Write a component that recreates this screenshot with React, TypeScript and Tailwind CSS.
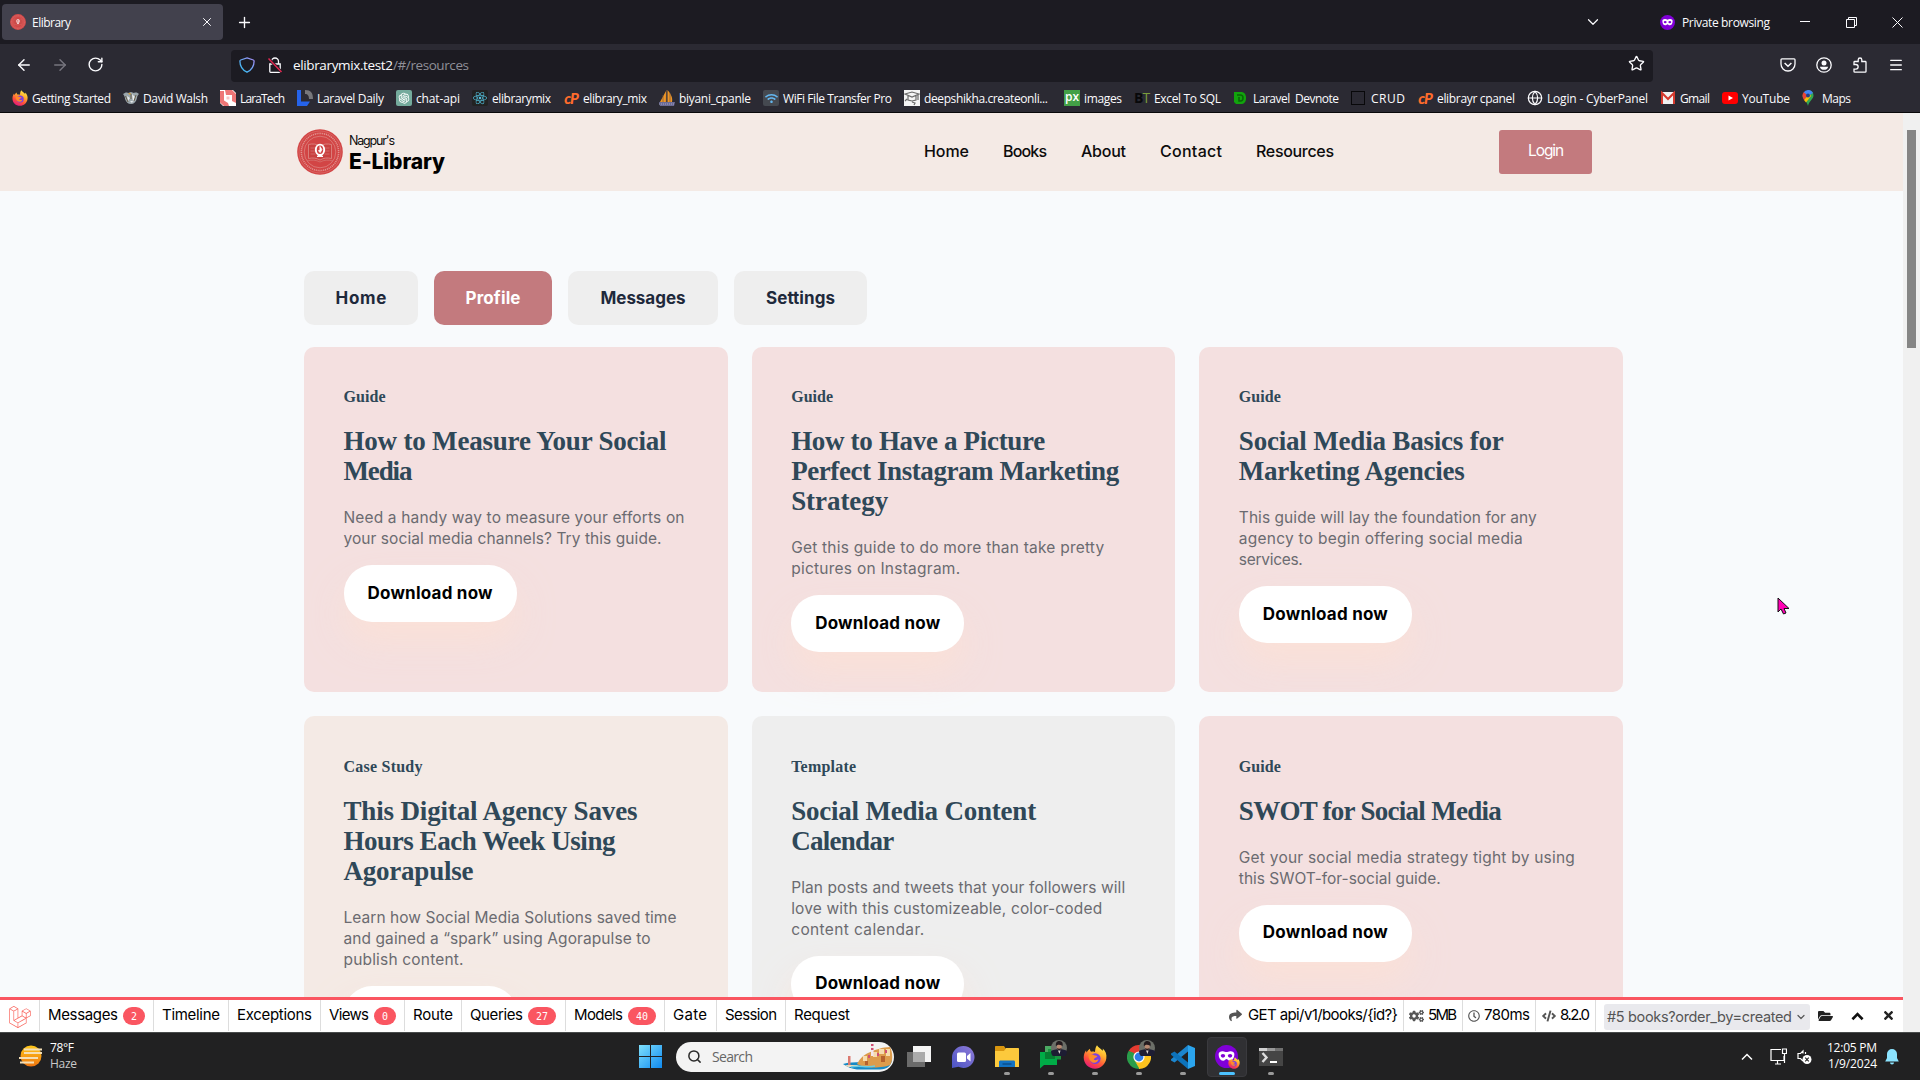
import React, { useLayoutEffect, useRef } from "react";
import {
  ArrowLeft,
  ArrowRight,
  ChevronDown,
  Globe,
  Menu,
  Plus,
  RotateCw,
  Search,
  Star,
  X,
} from "lucide-react";
import { FaLaravel, FaReact, FaShare, FaCogs, FaRegClock, FaCode, FaFolderOpen, FaTimes, FaWifi } from "react-icons/fa";
import { AiOutlineOpenAI } from "react-icons/ai";

/** One line of text tracked so that it fills the given width. */
function Line({ w, className = "", children }: { w: number; className?: string; children: string }) {
  const ref = useRef<HTMLSpanElement>(null);
  useLayoutEffect(() => {
    const el = ref.current;
    if (!el) return;
    el.style.letterSpacing = "0px";
    const natural = el.getBoundingClientRect().width;
    el.style.letterSpacing = `${(w - natural) / Math.max(1, children.length - 1)}px`;
  }, [w, children]);
  return (
    <span className="block shrink-0 whitespace-pre" style={{ width: w }}>
      <span ref={ref} className={"inline-block whitespace-pre " + className}>
        {children}
      </span>
    </span>
  );
}

/* ---------- icons ---------- */

function Emblem({ className = "" }: { className?: string }) {
  return (
    <svg viewBox="0 0 46 46" className={className}>
      <circle cx="23" cy="23" r="22.8" fill="#d24545" />
      <circle cx="23" cy="23" r="21" fill="none" stroke="#de7f7c" strokeWidth=".5" />
      <circle cx="23" cy="23" r="18.6" fill="none" stroke="#e29390" strokeWidth="1.600" strokeDasharray="1.1 .8" />
      <circle cx="23" cy="23" r="15.8" fill="none" stroke="#e08a87" strokeWidth=".7" />
      <path d="M11.5 15.5c4-1 8-.6 11.5 1.5 3.500-2.100 7.500-2.500 11.500-1.500v14c-4-1-8-.6-11.500 1.500-3.500-2.100-7.500-2.500-11.500-1.500z" fill="#c9403f" stroke="#dd8b88" strokeWidth=".8" />
      <path d="M13.500 19h5M13.500 22h5M13.500 25h5M27.500 19h5M27.500 22h5M27.500 25h5M10 32c5-1.500 9-1 13 1 4-2 8-2.500 13-1" stroke="#d67875" strokeWidth=".7" fill="none" />
      <ellipse cx="23" cy="20.800" rx="4.200" ry="5.200" fill="#cf4242" stroke="#fff" strokeWidth="1.900" />
      <path d="M23 17.500v3l-1.500 1.500 1.800 1.500 1.500-3zM20 27.500l3-2 3 2z" fill="#fff" stroke="#fff" strokeWidth=".9" />
    </svg>
  );
}

function Firefox({ className = "" }: { className?: string }) {
  return (
    <svg viewBox="0 0 24 24" className={className}>
      <defs>
        <linearGradient id="ffBody" x1=".8" y1="0" x2=".3" y2="1">
          <stop offset="0" stopColor="#fff04d" />
          <stop offset=".35" stopColor="#ffb22e" />
          <stop offset=".7" stopColor="#ff4f3c" />
          <stop offset="1" stopColor="#e3187e" />
        </linearGradient>
      </defs>
      <path d="M14 .3c1 2 4 3.500 5.500 5.500.6-.5.400-1.500.200-2.200C22.500 6 24 9.500 23.300 13.500 22.400 19.500 17.600 23.700 12 23.700 5.600 23.700.7 18.800.7 12.600c0-3 1-5.500 2.400-7.400 0 1 .2 1.700.6 2.200.9-1.800 2-2.900 3.300-3.700 0 1.200.3 2.300 1.200 3C9.400 6.500 11 6.700 12 7 12.200 4.500 12.500 2 14 .3z" fill="url(#ffBody)" />
      <circle cx="12.200" cy="13.600" r="5.400" fill="#7a3fe0" />
      <path d="M5.500 9.500c2-.6 4.500-.3 6.500 1 1.300.1 2 .4 2.400.8-1 1.700-3 1.500-3.700 3.200 1.500 1.200 3.800.6 4.800-.7-.3 3-2.800 4.300-5 3.900-3-.5-5.200-3.500-5-8.200z" fill="#ff8a2a" />
    </svg>
  );
}

function Mask({ className = "" }: { className?: string }) {
  return (
    <svg viewBox="0 0 24 24" className={className}>
      <circle cx="12" cy="12" r="12" fill="#8000d7" />
      <path d="M3.800 9.500C3.800 7.500 6 6.300 8.200 6.500c1.500.1 2.600.9 3.800.9s2.300-.8 3.800-.9c2.200-.2 4.400 1 4.400 3 0 4-1.800 7-4.600 7-2 0-2.700-1.800-3.600-1.800s-1.600 1.800-3.600 1.800c-2.800 0-4.600-3-4.600-7z" fill="#fff" />
      <ellipse cx="8.300" cy="11.300" rx="2.300" ry="1.900" fill="#8000d7" />
      <ellipse cx="15.700" cy="11.300" rx="2.300" ry="1.900" fill="#8000d7" />
    </svg>
  );
}

function Chrome({ className = "" }: { className?: string }) {
  return (
    <svg viewBox="0 0 24 24" className={className}>
      <path d="M12 12 1.600 6A12 12 0 0 1 22.400 6z" fill="#e53b30" />
      <path d="M12 12 22.400 6A12 12 0 0 1 12 24z" fill="#fcc31e" />
      <path d="M12 12v12A12 12 0 0 1 1.600 6z" fill="#2a9d4a" />
      <path d="M12 6.500h10.600a12 12 0 0 0-.2-.5H11z" fill="#e53b30" />
      <path d="M7.200 14.800 12.500 24 17 14.500z" fill="#fcc31e" />
      <path d="M1.600 6l5.400 9 3 2.500L7 8z" fill="#2a9d4a" />
      <circle cx="12" cy="12" r="5.600" fill="#fff" />
      <circle cx="12" cy="12" r="4.400" fill="#2f7de9" />
    </svg>
  );
}

function Avatar() {
  return (
    <svg viewBox="0 0 16 16" className="absolute -top-[5px] left-[12px] size-4">
      <circle cx="8" cy="8" r="8" fill="#6c6f68" />
      <path d="M0 11c3-2 13-2.500 16 0a8 8 0 0 1-16 0z" fill="#1d1d33" />
      <path d="M7 10.500h2.500l-1 3.500z" fill="#d9d2cc" />
      <ellipse cx="8.200" cy="6.500" rx="2.500" ry="3.600" fill="#b98a72" />
      <path d="M5 6.500c-.8-4 1.300-5.500 3.500-5.400C11.300 1.200 12.300 3 11.500 6.500 11 4.700 6 3.700 5 6.500zM6 8c1 1 3.500 1 4.500 0-.3 2.800-4 2.800-4.500 0z" fill="#231a1e" />
    </svg>
  );
}

function Shield() {
  return (
    <svg viewBox="0 0 16 16" className="h-4 w-4" fill="none">
      <defs>
        <linearGradient id="sh" x1="1" y1="0" x2="0" y2="1">
          <stop offset="0" stopColor="#a98bf5" />
          <stop offset="1" stopColor="#2bc3f2" />
        </linearGradient>
      </defs>
      <path d="M8 .9 14.300 3c.5.200.8.500.8 1 0 5-2 8.800-7.100 11.200C2.900 12.800.9 9 .9 4c0-.5.300-.8.800-1z" stroke="url(#sh)" strokeWidth="1.300" />
    </svg>
  );
}

function BrokenLock() {
  return (
    <svg viewBox="0 0 16 16" className="h-4 w-4" fill="none">
      <path d="M4.500 7V4.500a3.500 3.500 0 0 1 7 0V7M2.800 7h10.400v7.500a.8.800 0 0 1-.8.800H3.600a.8.800 0 0 1-.8-.8z" stroke="#fbfbfe" strokeWidth="1.300" />
      <path d="m1.500 1.500 13 13.500" stroke="#1c1b22" strokeWidth="3" />
      <path d="m1.500 1.500 13 13.500" stroke="#e22850" strokeWidth="1.500" />
    </svg>
  );
}

function CPanel() {
  return (
    <span className="flex h-4 w-4 shrink-0 items-center justify-center font-['Lato'] text-[15px] leading-none font-black tracking-[-1px] text-[#ff6c2c] italic">
      cP
    </span>
  );
}

const ico = "h-4 w-4 shrink-0";

const bookmarks: { label: string; w: number; icon: React.ReactNode; text?: number }[] = [
  { label: "Getting Started", w: 79, icon: <Firefox className={ico} /> },
  {
    label: "David Walsh",
    w: 65,
    icon: (
      <svg viewBox="0 0 16 16" className={ico}>
        <path d="M0 4c2-1 3-2 5-1l3-1 3 1c2-1 4 0 5 1-1 1-2 2-2 4-1 4-3 6-6 6S3 12 2 9C2 7 1 5 0 4z" fill="#9aa5ab" />
        <path d="m4 6 3 2-2 3zM9 4l3 3-2 5zM7 11l2 2 1-2z" fill="#e8ebec" />
        <path d="M2.500 6l2.500 6M8 4v5M13 5l-2 6" stroke="#5a4a30" strokeWidth=".8" />
        <path d="M5 3l2 2 1-2z" fill="#d09a32" />
      </svg>
    ),
  },
  {
    label: "LaraTech",
    w: 45,
    icon: (
      <svg viewBox="0 0 16 16" className={ico}>
        <path d="M0 0h13l3 3v13H3l-3-3z" fill="#fff" />
        <path d="M0 1h4v9.500L8 13l1 3H4L0 12.500zM5 0h7l4 4v9l-4-2V5H6z" fill="#ee7676" />
        <path d="M6.500 6.500h3v3h-3z" fill="#f8c4c4" />
      </svg>
    ),
  },
  {
    label: "Laravel Daily",
    w: 67,
    icon: (
      <svg viewBox="0 0 16 16" className={ico}>
        <path d="M0 0h4v11.500h9L10 16H0z" fill="#2563eb" />
        <path d="M8 0c6 0 8 3 8 9h-4c0-3-1-5-4-5z" fill="#77777b" />
      </svg>
    ),
  },
  {
    label: "chat-api",
    w: 44,
    icon: (
      <span className="flex h-4 w-4 shrink-0 items-center justify-center rounded-[2px] bg-[#74aa9c]">
        <AiOutlineOpenAI className="h-3.5 w-3.5 text-white" />
      </span>
    ),
  },
  {
    label: "elibrarymix",
    w: 59,
    icon: (
      <span className="flex h-4 w-4 shrink-0 items-center justify-center rounded-[2px] bg-[#222]">
        <FaReact className="h-3.5 w-3.5 text-[#53c1de]" />
      </span>
    ),
  },
  { label: "elibrary_mix", w: 64, icon: <CPanel /> },
  {
    label: "biyani_cpanle",
    w: 72,
    icon: (
      <svg viewBox="0 0 16 16" className={ico}>
        <path d="M7 1v11H1zM8.500 0C12 4 14 8 13 12H8.500z" fill="#ee9526" />
        <path d="m7.500 0-.2 12M4 5v7M11 3v9" stroke="#735641" strokeWidth=".7" />
        <path d="M0 12h16l-1 4H1z" fill="#6b6b96" />
        <path d="M0 14h16" stroke="#a3a3c4" strokeDasharray="1 1" />
      </svg>
    ),
  },
  {
    label: "WiFi File Transfer Pro",
    w: 109,
    icon: (
      <span className="flex h-4 w-4 shrink-0 items-center justify-center rounded-[2px] bg-[#454950]">
        <FaWifi className="h-[13px] w-[13px] text-[#63b6ee]" />
      </span>
    ),
  },
  {
    label: "deepshikha.createonli...",
    w: 128,
    text: 124,
    icon: (
      <svg viewBox="0 0 16 16" className={ico}>
        <path d="M0 0h16v16H0z" fill="#f4f4f4" />
        <path d="m1 4 7-2 7 2-7 3zM4 6v4l4 1 4-1V6M14 5v5M3 9l-2 2M8 12l3 1-1 2" fill="none" stroke="#6a6a6a" strokeWidth="1.200" />
      </svg>
    ),
  },
  {
    label: "images",
    w: 38,
    icon: (
      <span className="flex h-4 w-4 shrink-0 items-center justify-center bg-[#43a047] pb-0.5 font-['Open_Sans'] text-[12px] leading-none font-semibold text-white">
        px
      </span>
    ),
  },
  {
    label: "Excel To SQL",
    w: 67,
    icon: (
      <span className="flex h-4 w-4 shrink-0 items-center text-[14px] leading-none font-bold">
        <span className="text-[#08080a]">B</span>
        <span className="-ml-px font-normal text-[#7a9c3c]">T</span>
      </span>
    ),
  },
  {
    label: "Laravel  Devnote",
    w: 86,
    icon: (
      <svg viewBox="0 0 16 16" className={ico}>
        <path d="M1 2h7c3 0 5 2 5 6s-2 6-5 6H3l-2-2z" fill="#12a30d" />
        <path d="M4 5h3.500C9.500 5 10 6.200 10 8s-.6 3-2.500 3H6V7" fill="none" stroke="#086606" strokeWidth="1.500" />
      </svg>
    ),
  },
  { label: "CRUD", w: 34, icon: <span className="mr-0.5 h-[14px] w-[14px] shrink-0 border border-[#08080a]" /> },
  { label: "elibrayr cpanel", w: 78, icon: <CPanel /> },
  { label: "Login - CyberPanel", w: 101, icon: <Globe className="h-4 w-4 shrink-0 text-[#fbfbfe]" strokeWidth={1.8} /> },
  {
    label: "Gmail",
    w: 30,
    icon: (
      <svg viewBox="0 0 16 16" className={ico}>
        <path d="M1 2h14v12H1z" fill="#f1f1f1" />
        <path d="M2 14V3l6 6 6-6v11" fill="none" stroke="#d5392d" strokeWidth="2" />
      </svg>
    ),
  },
  {
    label: "YouTube",
    w: 48,
    icon: (
      <svg viewBox="0 0 16 16" className={ico}>
        <rect x="0" y="2" width="16" height="12" rx="3" fill="#f00" />
        <path d="m6.500 5.500 4.500 2.500-4.500 2.500z" fill="#fff" />
      </svg>
    ),
  },
  {
    label: "Maps",
    w: 29,
    icon: (
      <svg viewBox="0 0 16 16" className="-ml-px mr-px h-4 w-4 shrink-0">
        <path d="M7 0a5.500 5.500 0 0 1 5.500 5.500C12.500 9 8 11 7 16 6 11 1.500 9 1.500 5.500z" fill="#34a853" />
        <path d="M7 0a5.500 5.500 0 0 1 5 3L7 6 2.500 2.500A5.500 5.500 0 0 1 7 0z" fill="#4285f4" />
        <path d="M2.700 2.200 7 5.500 3 10C2 8.500 1.500 7 1.500 5.500c0-1.500.5-2.500 1.200-3.300z" fill="#ea4335" />
        <path d="M3 10 8.500 4 10 6 5 12.500z" fill="#fbbc04" />
        <circle cx="7" cy="5.500" r="2" fill="#20408c" />
      </svg>
    ),
  },
];

function Browser() {
  return (
    <div className="h-[113px] shrink-0 border-b border-[#08080a] bg-[#2b2a33] font-['Open_Sans',sans-serif] text-[12px] text-[#fbfbfe]">
      <div className="flex h-11 items-center bg-[#1c1b22] pl-0.5">
        <div className="flex h-9 w-[221px] items-center rounded-[4px] bg-[#42414d] pl-2">
          <Emblem className="h-4 w-4" />
          <div className="ml-1.5 pt-px">
            <Line w={39}>Elibrary</Line>
          </div>
          <X className="mr-[9px] ml-auto h-3.5 w-3.5" strokeWidth={1.7} />
        </div>
        <Plus className="ml-[13px] h-[17px] w-[17px]" strokeWidth={1.9} />
        <ChevronDown className="ml-auto h-[18px] w-[18px]" strokeWidth={1.6} />
        <Mask className="ml-[58px] h-[15px] w-[15px]" />
        <div className="ml-[7px] pt-0.5">
          <Line w={88}>Private browsing</Line>
        </div>
        <div className="mt-[-1px] ml-[30px] h-px w-[10px] bg-[#fbfbfe]" />
        <svg viewBox="0 0 11 11" className="ml-9 h-[11px] w-[11px]" fill="none" stroke="#fbfbfe">
          <path d="M.5 2.500h8v8h-8zM2.500 2V.5h8v8H9" />
        </svg>
        <svg viewBox="0 0 11 11" className="mr-[17px] ml-[35px] h-[11px] w-[11px]" fill="none" stroke="#fbfbfe">
          <path d="m.5.5 10 10m0-10-10 10" />
        </svg>
      </div>
      <div className="flex h-10 items-center pt-1">
        <ArrowLeft className="-mt-[3px] ml-[15px] h-[18px] w-[18px]" strokeWidth={1.9} />
        <ArrowRight className="-mt-[3px] ml-[18px] h-[18px] w-[18px] text-[#77767f]" strokeWidth={1.9} />
        <RotateCw className="-mt-[3px] ml-[18px] h-[17px] w-[17px]" strokeWidth={2} />
        <div className="ml-[127px] flex h-8 w-[1422px] items-center rounded-[4px] bg-[#1c1b22] pb-0.5 pl-2">
          <Shield />
          <div className="ml-3">
            <BrokenLock />
          </div>
          <div className="ml-2.5 flex text-[13.500px]">
            <Line w={100}>elibrarymix.test2</Line>
            <Line w={76} className="text-[#8f8f98]">
              /#/resources
            </Line>
          </div>
          <Star className="mr-2 ml-auto -mt-1 h-[17px] w-[17px]" strokeWidth={1.9} />
        </div>
        <svg viewBox="0 0 16 16" className="-mt-[3px] ml-[127px] h-4 w-4" fill="none" stroke="#fbfbfe" strokeWidth="1.300">
          <path d="M1 2.700c0-.5.300-.9.900-.9h12.200c.6 0 .9.400.9.900V7a7 7 0 0 1-14 0z" />
          <path d="m4.600 6 3.400 3.200L11.400 6" strokeWidth="1.500" />
        </svg>
        <svg viewBox="0 0 16 16" className="-mt-[3px] ml-5 h-4 w-4">
          <circle cx="8" cy="8" r="7.200" fill="none" stroke="#fbfbfe" strokeWidth="1.300" />
          <circle cx="8" cy="6" r="2.500" fill="#fbfbfe" />
          <path d="M3.800 9.700h8.400C11.500 12 10 12.800 8 12.800s-3.500-.8-4.200-3.100z" fill="#fbfbfe" />
        </svg>
        <svg viewBox="0 0 16 16" className="-mt-[3px] ml-5 h-4 w-4" fill="none" stroke="#fbfbfe" strokeWidth="1.300">
          <path d="M2 7.500V5.300c0-.5.300-.8.800-.8h3.400V2.800a1.800 1.800 0 0 1 3.600 0v1.700h3.400c.5 0 .8.300.8.800v9.100c0 .5-.3.800-.8.800H2.800a.8.800 0 0 1-.8-.8v-2.200h1.800a2.300 2.300 0 0 0 0-4.700z" />
        </svg>
        <Menu className="-mt-[3px] ml-5 h-4 w-4" strokeWidth={1.9} />
      </div>
      <div className="flex h-[28px] items-center pl-3">
        {bookmarks.map((b) => (
          <div key={b.label} className="mr-3 flex shrink-0 items-center gap-1">
            {b.icon}
            <div className="shrink-0 pt-0.5" style={{ width: b.w }}>
              <Line w={b.text ?? b.w}>{b.label}</Line>
            </div>
          </div>
        ))}
      </div>
    </div>
  );
}

function Header() {
  return (
    <header className="flex h-[78px] shrink-0 items-center bg-[#f4eae5] pl-[297px] text-[16px] font-medium text-[#0c0c0c]">
      <Emblem className="h-[46px] w-[46px]" />
      <div className="ml-1.5 flex w-[575px] flex-col pb-0.5">
        <Line w={46} className="text-[12.500px] leading-[14px] font-normal">
          Nagpur's
        </Line>
        <Line w={96} className="text-[21px] leading-[20px] font-extrabold text-black">
          E-Library
        </Line>
      </div>
      <nav className="-mt-0.5 flex gap-[34px]">
        <Line w={45}>Home</Line>
        <Line w={44}>Books</Line>
        <Line w={45}>About</Line>
        <Line w={62}>Contact</Line>
        <Line w={78}>Resources</Line>
      </nav>
      <button className="ml-[165px] flex h-11 w-[93px] items-center justify-center rounded-[3px] bg-[#c37a7e] pb-0.5 text-[15.500px] font-normal text-white">
        <Line w={36}>Login</Line>
      </button>
    </header>
  );
}

type CardData = { kind: [string, number]; title: [string, number][]; body: [string, number][]; bg: string; action: string };

const cards: CardData[] = [
  {
    kind: ["Guide", 42],
    title: [["How to Measure Your Social", 323], ["Media", 69]],
    body: [["Need a handy way to measure your efforts on", 341], ["your social media channels? Try this guide.", 318]],
    bg: "bg-[#f4e0e0] pt-10",
    action: "Download now",
  },
  {
    kind: ["Guide", 42],
    title: [["How to Have a Picture", 254], ["Perfect Instagram Marketing", 328], ["Strategy", 97]],
    body: [["Get this guide to do more than take pretty", 313], ["pictures on Instagram.", 169]],
    bg: "bg-[#f4e0e0] pt-10",
    action: "Download now",
  },
  {
    kind: ["Guide", 42],
    title: [["Social Media Basics for", 265], ["Marketing Agencies", 226]],
    body: [["This guide will lay the foundation for any", 298], ["agency to begin offering social media", 284], ["services.", 64]],
    bg: "bg-[#f4e0e0] pt-10",
    action: "Download now",
  },
  {
    kind: ["Case Study", 79],
    title: [["This Digital Agency Saves", 294], ["Hours Each Week Using", 272], ["Agorapulse", 130]],
    body: [["Learn how Social Media Solutions saved time", 333], ["and gained a “spark” using Agorapulse to", 307], ["publish content.", 120]],
    bg: "bg-[#f4eae5] pt-[40.500px]",
    action: "",
  },
  {
    kind: ["Template", 65],
    title: [["Social Media Content", 245], ["Calendar", 103]],
    body: [["Plan posts and tweets that your followers will", 334], ["love with this customizeable, color-coded", 311], ["content calendar.", 133]],
    bg: "bg-[#eeeeee] pt-[40.500px]",
    action: "Download now",
  },
  {
    kind: ["Guide", 42],
    title: [["SWOT for Social Media", 263]],
    body: [["Get your social media strategy tight by using", 336], ["this SWOT-for-social guide.", 202]],
    bg: "bg-[#f4e0e0] pt-[40.500px]",
    action: "Download now",
  },
];

function Card({ c }: { c: CardData }) {
  return (
    <article className={"flex h-[345px] flex-col items-start rounded-[10px] px-[39.500px] " + c.bg}>
      <div className="h-[39px] font-['Liberation_Serif',serif] text-[16px] leading-5 font-bold text-[#2f4858]">
        <Line w={c.kind[1]}>{c.kind[0]}</Line>
      </div>
      <h3 className="font-['Liberation_Serif',serif] text-[27px] leading-[30px] font-bold text-[#2f4858]">
        {c.title.map(([t, w]) => (
          <Line key={t} w={w}>
            {t}
          </Line>
        ))}
      </h3>
      <div className="mt-[21px] text-[15.500px] leading-[21px] text-[#6b6b70]">
        {c.body.map(([t, w]) => (
          <Line key={t} w={w}>
            {t}
          </Line>
        ))}
      </div>
      <button className="mt-[16px] flex h-[57px] w-[173px] shrink-0 items-center justify-center rounded-[28px] bg-white text-[17px] font-bold text-black shadow-[0_20px_35px_rgba(255,225,210,0.6)]">
        {c.action && <Line w={125}>{c.action}</Line>}
      </button>
    </article>
  );
}

const tabBase = "flex h-[54px] items-center justify-center rounded-[10px] pt-0.5 text-[17px] font-bold ";

function Page() {
  return (
    <div className="flex h-[919px] shrink-0 bg-[#f0f0f0] font-['Inter',sans-serif]">
      <div className="flex w-[1903px] flex-col overflow-hidden bg-[#f8fafc]">
        <Header />
        <div className="flex min-h-0 flex-1 flex-col overflow-hidden pl-[304px]">
          <div className="mt-20 flex shrink-0 gap-4">
            <div className={tabBase + "w-[114px] bg-[#eeeeee] text-[#1e293b]"}>
              <Line w={51}>Home</Line>
            </div>
            <div className={tabBase + "w-[118px] bg-[#c37a7e] text-white"}>
              <Line w={55}>Profile</Line>
            </div>
            <div className={tabBase + "w-[150px] bg-[#eeeeee] text-[#1e293b]"}>
              <Line w={85}>Messages</Line>
            </div>
            <div className={tabBase + "w-[133px] bg-[#eeeeee] text-[#1e293b]"}>
              <Line w={69}>Settings</Line>
            </div>
          </div>
          <main className="mt-[22px] grid w-[1319px] shrink-0 grid-cols-3 gap-6">
            {cards.map((c) => (
              <Card key={c.title[0][0]} c={c} />
            ))}
          </main>
        </div>
        <DebugBar />
      </div>
      <div className="flex-1 pt-[17px] pl-1">
        <div className="h-[218px] w-[9px] bg-[#858585]" />
      </div>
    </div>
  );
}

const debugTabs: { label: string; w: number; cell: string; badge?: string; badgeW?: string }[] = [
  { label: "Messages", w: 70, cell: "w-[114px]", badge: "2", badgeW: "w-[22px]" },
  { label: "Timeline", w: 58, cell: "w-[75px]" },
  { label: "Exceptions", w: 75, cell: "w-[92px]" },
  { label: "Views", w: 40, cell: "w-[84px]", badge: "0", badgeW: "w-[22px]" },
  { label: "Route", w: 40, cell: "w-[57px]" },
  { label: "Queries", w: 53, cell: "w-[104px]", badge: "27", badgeW: "w-[28px]" },
  { label: "Models", w: 49, cell: "w-[99px]", badge: "40", badgeW: "w-[28px]" },
  { label: "Gate", w: 34, cell: "w-[52px]" },
  { label: "Session", w: 52, cell: "w-[69px]" },
];

function DebugBar() {
  return (
    <div className="flex h-[35px] shrink-0 items-center border-t-[3px] border-[#fa5661] bg-white pb-px text-[15px] text-black">
      <div className="flex h-[31px] w-10 items-center justify-center border-r border-[#dddddd] pt-0.5">
        <FaLaravel className="h-[22px] w-[22px] text-[#f9675f]" />
      </div>
      {debugTabs.map((t) => (
        <div key={t.label} className={"flex h-[31px] shrink-0 items-center gap-[5px] border-r border-[#dddddd] pl-2 " + t.cell}>
          <Line w={t.w}>{t.label}</Line>
          {t.badge && (
            <span className={"mt-px flex h-[18px] items-center justify-center rounded-full bg-[#fa5661] font-['DejaVu_Sans_Mono'] text-[10px] text-white " + t.badgeW}>
              {t.badge}
            </span>
          )}
        </div>
      ))}
      <div className="pl-2">
        <Line w={56}>Request</Line>
      </div>
      <div className="ml-auto flex h-[31px] w-[175px] items-center gap-1.5 border-r border-[#dddddd]">
        <FaShare className="h-[13px] w-[13px] text-[#555]" />
        <Line w={150}>{"GET api/v1/books/{id?}"}</Line>
      </div>
      <div className="flex h-[31px] w-[59px] items-center gap-1 border-r border-[#dddddd] pl-[5px]">
        <FaCogs className="h-[14px] w-[15px] text-[#555]" />
        <Line w={29}>5MB</Line>
      </div>
      <div className="flex h-[31px] w-[73px] items-center gap-1 border-r border-[#dddddd] pl-[5px]">
        <FaRegClock className="h-3 w-3 text-[#555]" />
        <Line w={46}>780ms</Line>
      </div>
      <div className="flex h-[31px] w-[60px] items-center gap-1 border-r border-[#dddddd] pl-[6px]">
        <FaCode className="h-3.5 w-3.5 text-[#555]" />
        <Line w={30}>8.2.0</Line>
      </div>
      <div className="mt-[3px] ml-[8px] flex h-[26px] w-[206px] items-center rounded-[3px] bg-[#e9e9ed] pl-[3px] text-[14.500px] text-[#555]">
        <Line w={185}>#5 books?order_by=created</Line>
        <ChevronDown className="ml-[3px] h-3 w-3" strokeWidth={2.4} />
      </div>
      <FaFolderOpen className="ml-2 h-4 w-[15px] text-[#222]" />
      <svg viewBox="0 0 14 9" className="mt-0.5 ml-[18px] h-[9px] w-[13px]" fill="none">
        <path d="m1.500 7.500 5.500-5.500 5.500 5.500" stroke="#111" strokeWidth="2.800" />
      </svg>
      <FaTimes className="mr-[8px] ml-[18px] h-[13px] w-[13px] text-[#222]" />
    </div>
  );
}

function Task({ children, dot = true, active = false }: { children?: React.ReactNode; dot?: boolean; active?: boolean }) {
  return (
    <div className={"relative mr-1 flex h-10 w-10 shrink-0 flex-col items-center rounded-[4px] border pt-[7px] " + (active ? "border-[#3a3a3e] bg-[#303033]" : "border-transparent")}>
      <div className="relative h-6 w-6">{children}</div>
      {active ? (
        <div className="mt-[3px] h-[3px] w-4 rounded-full bg-[#4cc2ff]" />
      ) : dot ? (
        <div className="mt-[3px] h-[3px] w-1.5 rounded-full bg-[#9a9a9a]" />
      ) : null}
    </div>
  );
}

const ti = "h-6 w-6";

function Taskbar() {
  return (
    <div className="flex h-12 shrink-0 items-center border-t border-[#484b4b] bg-[#212122] font-['Open_Sans',sans-serif] text-[12px] text-white">
      <div className="flex w-[639px] items-center pb-0.5 pl-[19px]">
        <svg viewBox="0 0 24 24" className="h-6 w-6">
          <defs>
            <linearGradient id="sun" x1="0" y1="0" x2="0" y2="1">
              <stop offset="0" stopColor="#ffc818" />
              <stop offset="1" stopColor="#ee7410" />
            </linearGradient>
          </defs>
          <circle cx="12" cy="12" r="10.500" fill="url(#sun)" />
          <path d="M5 5.500h18M5 9h18M0 14h19M1 18.500h14" stroke="#f5dfb5" strokeWidth="1.800" />
        </svg>
        <div className="ml-[7px] leading-4">
          <Line w={24}>78°F</Line>
          <Line w={27} className="text-[#c9c9c9]">
            Haze
          </Line>
        </div>
      </div>
      <svg viewBox="0 0 23 23" className="h-[23px] w-[23px]">
        <defs>
          <linearGradient id="win" x1="0" y1="0" x2="1" y2="1">
            <stop offset="0" stopColor="#7fe0fc" />
            <stop offset="1" stopColor="#0f8af0" />
          </linearGradient>
        </defs>
        <path d="M0 0h11v11H0zM12 0h11v11H12zM0 12h11v11H0zM12 12h11v11H12z" fill="url(#win)" />
      </svg>
      <div className="ml-3.5 flex h-[30px] w-[218px] items-center rounded-full bg-[#f3f3f3] pl-[11px] text-[14px] text-[#666]">
        <Search className="h-[15px] w-[15px] text-[#2a2a2a]" strokeWidth={2.4} />
        <div className="ml-[10px]">
          <Line w={41}>Search</Line>
        </div>
        <svg viewBox="0 0 50 26" className="ml-auto mr-px h-[26px] w-[50px]">
          <path d="M0 20c10-3 26-1 49-4-1 6-5 9.500-12 9.500H14C9 25 4 23 0 20z" fill="#168ac6" />
          <path d="M14 20c3-6 7-9 11-11 6-3 15-6 22-6 3 6 3 14 0 18-6 3-26 4-33-1z" fill="#dd9c4c" />
          <path d="M20 12h4v5h-4zM30 8h4v5h-4zM36 5h5v5h-5zM43 5h4v7h-4z" fill="#f6dcae" />
          <path d="M22 17h3v4h-3zM38 12h4v6h-4z" fill="#b5622d" />
          <path d="M28 0h2.500v12H28z" fill="#f3e7ec" />
          <path d="M28 0h2.500v2H28zM28 4h2.500v2H28zM34 9h2v3h-2zM42 6h2v3h-2zM25 11h2v3h-2z" fill="#cf4f74" />
          <path d="M5 12h2.500v9H5z" fill="#db7970" />
          <path d="M2 21h12l4 2H5z" fill="#e8d7b8" />
          <path d="M8 23c9-2 15 1 24-1" stroke="#69cde4" strokeWidth="1.500" fill="none" />
        </svg>
      </div>
      <div className="ml-[5px] flex">
        <Task dot={false}>
          <svg viewBox="0 0 24 24" className={ti}>
            <path d="M6 1h18v16H6z" fill="#f4f4f4" />
            <path d="M0 7h18v15H0z" fill="#6b6b6b" />
            <path d="M6 7h12v10H6z" fill="#ababab" />
          </svg>
        </Task>
        <Task dot={false}>
          <svg viewBox="0 0 24 24" className={ti}>
            <defs>
              <linearGradient id="chat" x1="0" y1="1" x2="1" y2="0">
                <stop offset="0" stopColor="#4a53c4" />
                <stop offset="1" stopColor="#8f7bd8" />
              </linearGradient>
            </defs>
            <path d="M12.500 1a11 11 0 1 1-5 20.800L1 23V12A11.300 11.300 0 0 1 12.500 1z" fill="url(#chat)" />
            <rect x="6" y="7.500" width="9" height="9.500" rx="1.500" fill="#fff" />
            <path d="m16 11 3.500-3v8.500L16 13.500z" fill="#fff" />
          </svg>
        </Task>
        <Task>
          <svg viewBox="0 0 24 24" className={ti}>
            <path d="M0 2c0-.6.400-1 1-1h8l2 3-2 4H0z" fill="#d9960f" />
            <path d="M0 6h9l2-3h12c.6 0 1 .4 1 1v18H0z" fill="#fcc93c" />
            <path d="M4 22v-5c0-1 .8-1.500 1.500-1.500h13c1 0 1.500.6 1.500 1.500v5z" fill="#1272c3" />
            <path d="M7.500 19h9" stroke="#0b4f8d" strokeWidth="1.500" />
          </svg>
        </Task>
        <Task>
          <svg viewBox="0 0 24 24" className={ti}>
            <path d="M6 1h14v13H6z" fill="#4ca963" />
            <path d="M9 4h13v10.500H9z" fill="#1c9440" />
            <path d="M1 7h11v6h6v7H5l-4 3.500z" fill="#00ac47" />
            <path d="M6 7h10v7H6z" fill="#067e31" />
          </svg>
          <Avatar />
        </Task>
        <Task>
          <Firefox className={ti} />
        </Task>
        <Task>
          <Chrome className={ti} />
          <Avatar />
        </Task>
        <Task>
          <svg viewBox="0 0 24 24" className={ti}>
            <path d="M17 0 24 3v18l-7 3z" fill="#2ba5ee" />
            <path d="M17 0v6.500L3.500 17.500 0 15.500v-1.200z" fill="#1c86cf" />
            <path d="M17 24v-6.500L3.500 6.500 0 8.500v1.200z" fill="#0d73bb" />
          </svg>
        </Task>
        <Task active>
          <Mask className="h-[23px] w-[23px]" />
          <Firefox className="absolute right-[-1px] bottom-0 h-[12px] w-[12px]" />
        </Task>
        <Task>
          <svg viewBox="0 0 24 24" className={ti}>
            <path d="M0 3h24v18H0z" fill="#454545" />
            <path d="M0 3h8v3H0z" fill="#d0d0d0" />
            <path d="M8 3h8v3H8z" fill="#989898" />
            <path d="M16 3h8v3h-8z" fill="#707070" />
            <path d="m3.500 8 4 4.500-4 4.500" stroke="#ddd" strokeWidth="2.400" fill="none" />
            <path d="M11 17h7" stroke="#fff" strokeWidth="2" />
          </svg>
        </Task>
      </div>
      <svg viewBox="0 0 12 8" className="ml-auto h-[8px] w-3" fill="none">
        <path d="m1 6.500 5-5 5 5" stroke="#fff" strokeWidth="1.500" />
      </svg>
      <svg viewBox="0 0 17 17" className="ml-[17px] h-[17px] w-[17px]" fill="none" stroke="#fff" strokeWidth="1.200">
        <path d="M11 1.500H1v11h13V8M5 16h6M7.500 12.500V16M12.500 1h4v4.500h-4zM14.500 5.500v9.500" />
      </svg>
      <svg viewBox="0 0 15 15" className="ml-[10px] h-[15px] w-[15px]">
        <path d="M6 4.500V2L3.500 4.500H1v5h2.500L6 12M8.500 5V3" fill="none" stroke="#fff" strokeWidth="1.200" />
        <circle cx="10" cy="10.500" r="4.500" fill="#fff" />
        <path d="m8.200 8.700 3.600 3.600m0-3.600-3.600 3.600" stroke="#222" strokeWidth="1.100" />
      </svg>
      <div className="ml-[15px] flex w-[50px] flex-col items-end pb-0.5 leading-4">
        <Line w={50}>12:05 PM</Line>
        <Line w={49}>1/9/2024</Line>
      </div>
      <svg viewBox="0 0 14 16" className="mr-[21px] ml-2 h-4 w-3.5">
        <path d="M7 0a5 5 0 0 1 5 5v4l1.800 3.500H.2L2 9V5a5 5 0 0 1 5-5zM5 13.500h4a2 2 0 0 1-4 0z" fill="#8be4ff" />
      </svg>
    </div>
  );
}

export default function App() {
  return (
    <div className="relative flex h-[1080px] w-[1920px] flex-col overflow-hidden">
      <Browser />
      <Page />
      <Taskbar />
      <svg viewBox="0 0 13 18" className="absolute top-[597px] left-[1777px] h-[18px] w-[13px]">
        <path d="M1 1v14l3-3 2.500 5 2.500-1-2-4.500H12z" fill="#ff00b4" stroke="#111" strokeWidth="1" />
      </svg>
    </div>
  );
}
